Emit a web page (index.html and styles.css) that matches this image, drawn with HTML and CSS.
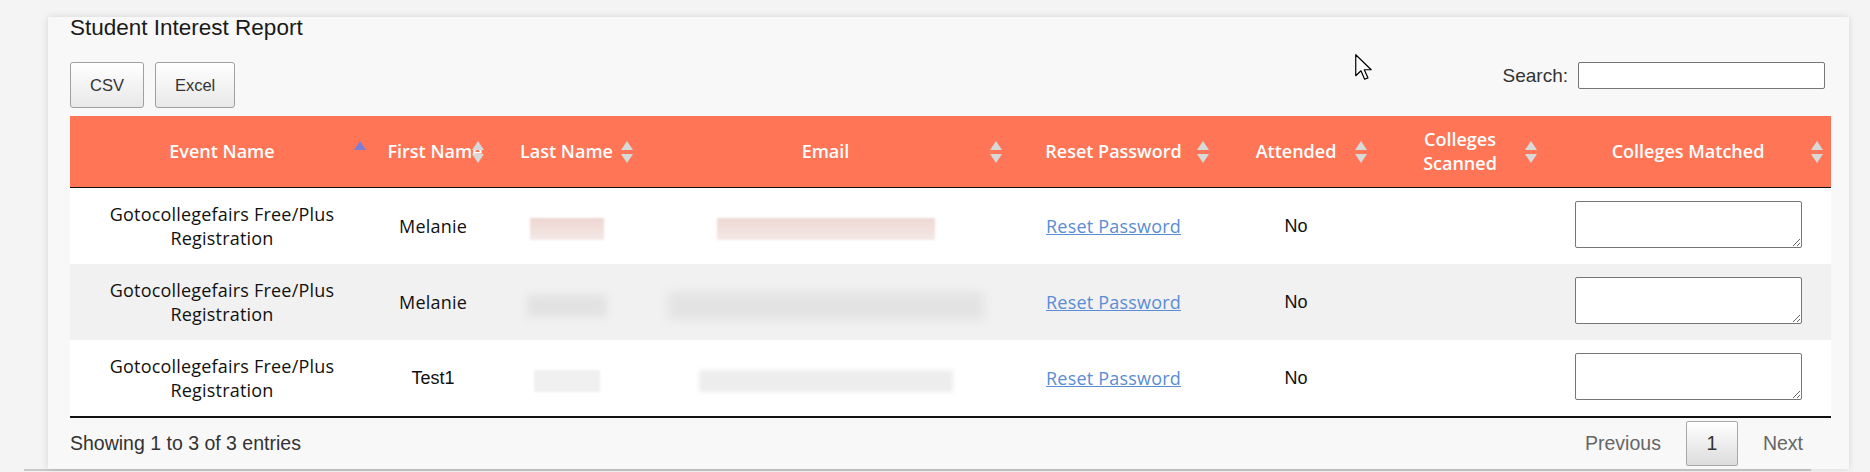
FILE: index.html
```html
<!DOCTYPE html>
<html lang="en">
<head>
<meta charset="utf-8">
<title>Student Interest Report</title>
<link rel="stylesheet" href="styles.css">
</head>
<body>
<div class="page">
  <div class="card">
    <h1 class="title">Student Interest Report</h1>
    <div class="toolbar">
      <div class="export">
        <button class="btn" type="button">CSV</button>
        <button class="btn" type="button">Excel</button>
      </div>
      <label class="search">Search:<input class="search-input" type="text"></label>
    </div>

    <table class="grid">
      <colgroup>
        <col class="c-event"><col class="c-first"><col class="c-last"><col class="c-email">
        <col class="c-reset"><col class="c-att"><col class="c-scan"><col class="c-match">
      </colgroup>
      <thead>
        <tr>
          <th>Event Name<span class="sort"><svg width="12" height="22" viewBox="0 0 12 22"><path class="asc" d="M6 0 L12 9 L0 9 Z"/></svg></span></th>
          <th class="nowrap">First Name<span class="sort"><svg width="12" height="22" viewBox="0 0 12 22"><path class="up" d="M6 0 L12 9 L0 9 Z"/><path class="down" d="M0 13 L12 13 L6 22 Z"/></svg></span></th>
          <th>Last Name<span class="sort"><svg width="12" height="22" viewBox="0 0 12 22"><path class="up" d="M6 0 L12 9 L0 9 Z"/><path class="down" d="M0 13 L12 13 L6 22 Z"/></svg></span></th>
          <th>Email<span class="sort"><svg width="12" height="22" viewBox="0 0 12 22"><path class="up" d="M6 0 L12 9 L0 9 Z"/><path class="down" d="M0 13 L12 13 L6 22 Z"/></svg></span></th>
          <th>Reset Password<span class="sort"><svg width="12" height="22" viewBox="0 0 12 22"><path class="up" d="M6 0 L12 9 L0 9 Z"/><path class="down" d="M0 13 L12 13 L6 22 Z"/></svg></span></th>
          <th>Attended<span class="sort"><svg width="12" height="22" viewBox="0 0 12 22"><path class="up" d="M6 0 L12 9 L0 9 Z"/><path class="down" d="M0 13 L12 13 L6 22 Z"/></svg></span></th>
          <th class="wrap">Colleges Scanned<span class="sort"><svg width="12" height="22" viewBox="0 0 12 22"><path class="up" d="M6 0 L12 9 L0 9 Z"/><path class="down" d="M0 13 L12 13 L6 22 Z"/></svg></span></th>
          <th>Colleges Matched<span class="sort"><svg width="12" height="22" viewBox="0 0 12 22"><path class="up" d="M6 0 L12 9 L0 9 Z"/><path class="down" d="M0 13 L12 13 L6 22 Z"/></svg></span></th>
        </tr>
      </thead>
      <tbody>
        <tr class="odd">
          <td class="hum">Gotocollegefairs Free/Plus Registration</td>
          <td class="hum">Melanie</td>
          <td><span class="redact r1-last"></span></td>
          <td><span class="redact r1-email"></span></td>
          <td class="hum"><a class="link" href="#">Reset Password</a></td>
          <td class="ari">No</td>
          <td></td>
          <td><textarea class="matched"></textarea></td>
        </tr>
        <tr class="even">
          <td class="hum">Gotocollegefairs Free/Plus Registration</td>
          <td class="hum">Melanie</td>
          <td><span class="redact r2-last"></span></td>
          <td><span class="redact r2-email"></span></td>
          <td class="hum"><a class="link" href="#">Reset Password</a></td>
          <td class="ari">No</td>
          <td></td>
          <td><textarea class="matched"></textarea></td>
        </tr>
        <tr class="odd last">
          <td class="hum">Gotocollegefairs Free/Plus Registration</td>
          <td class="ari">Test1</td>
          <td><span class="redact r3-last"></span></td>
          <td><span class="redact r3-email"></span></td>
          <td class="hum"><a class="link" href="#">Reset Password</a></td>
          <td class="ari">No</td>
          <td></td>
          <td><textarea class="matched"></textarea></td>
        </tr>
      </tbody>
    </table>

    <div class="footer">
      <div class="info">Showing 1 to 3 of 3 entries</div>
      <div class="pager">
        <span class="pg-link">Previous</span>
        <span class="pg-current">1</span>
        <span class="pg-link">Next</span>
      </div>
    </div>

    <svg class="cursor" width="18" height="27" viewBox="0 0 12 18">
      <path d="M0.5 0.5 L0.5 14.5 L4 11.2 L6.4 16.8 L8.6 15.9 L6.2 10.5 L10.8 10.5 Z" fill="#fff" stroke="#000" stroke-width="0.8" stroke-linejoin="round"/>
    </svg>
  </div>
  <div class="page-rule"></div>
</div>
</body>
</html>
```

FILE: styles.css
```css
* { box-sizing: border-box; }

html, body {
  margin: 0;
  padding: 0;
  background: #f4f4f4;
  height: 472px;
  overflow: hidden;
}

.page {
  padding-top: 17px;
}

.card {
  position: relative;
  margin-left: 48px;
  width: 1801px;
  height: 452px;
  background: #f8f8f8;
  padding: 0 18px 0 22px;
  box-shadow: 0 0 7px rgba(0, 0, 0, 0.13);
  font-family: "Liberation Sans", Arial, sans-serif;
  color: #222;
}

.title {
  margin: 0;
  font-weight: normal;
  font-size: 22.5px;
  line-height: 22px;
  color: #1a1a1a;
}

.toolbar {
  display: flex;
  justify-content: space-between;
  align-items: flex-start;
  margin-top: 23px;
  height: 46px;
}

.export {
  display: flex;
  gap: 11px;
}

.btn {
  height: 46px;
  padding: 0 19px;
  font-family: "Liberation Sans", Arial, sans-serif;
  font-size: 16.5px;
  color: #333;
  background: linear-gradient(#ffffff, #e8e8e8);
  border: 1px solid #a0a0a0;
  border-radius: 3px;
}

.search {
  display: flex;
  align-items: center;
  height: 27px;
  font-size: 19px;
  color: #333;
  margin-right: 6px;
}

.search-input {
  margin-left: 10px;
  width: 247px;
  height: 27px;
  border: 1px solid #767676;
  border-radius: 2px;
  background: #fff;
}

.grid {
  margin-top: 8px;
  width: 1761px;
  table-layout: fixed;
  border-collapse: separate;
  border-spacing: 0;
}

.c-event { width: 304px; }
.c-first { width: 118px; }
.c-last  { width: 149px; }
.c-email { width: 369px; }
.c-reset { width: 207px; }
.c-att   { width: 158px; }
.c-scan  { width: 170px; }
.c-match { width: 286px; }

.grid th {
  position: relative;
  height: 72px;
  padding: 0 10px;
  background: #ff7555;
  color: #fff;
  font-family: "Open Sans", "Noto Sans", sans-serif;
  font-weight: 600;
  font-size: 18px;
  line-height: 23.5px;
  text-align: center;
  border-bottom: 1px solid #111;
}

.grid th.nowrap {
  white-space: nowrap;
  padding: 0 4px 0 8px;
}

.grid th.wrap {
  padding: 0 22px;
}

.sort {
  position: absolute;
  right: 8px;
  top: 25px;
  width: 12px;
  height: 22px;
  display: block;
}
.sort svg { display: block; }
.sort .up, .sort .down { fill: #d8d8d8; }
.sort .asc { fill: #7b7fd8; }

.grid td {
  height: 76px;
  padding: 0 10px;
  text-align: center;
  vertical-align: middle;
  color: #111;
  font-size: 18px;
  line-height: 24px;
}

.grid tr.odd td { background: #ffffff; }
.grid tr.even td { background: #f1f1f1; }
.grid tr.last td {
  height: 78px;
  border-bottom: 2px solid #111;
}

.hum {
  font-family: "Open Sans", "Noto Sans", sans-serif;
  letter-spacing: 0.2px;
}
.ari {
  font-family: "Liberation Sans", Arial, sans-serif;
}

.link {
  color: #5a8dd4;
  text-decoration: underline;
}

.redact {
  display: inline-block;
  vertical-align: middle;
}
.r1-last {
  width: 74px; height: 22px; margin-top: 6px;
  background: linear-gradient(#efd6d1, #f4e9e7);
  filter: blur(1px);
}
.r1-email {
  width: 218px; height: 22px; margin-top: 6px;
  background: linear-gradient(#efd8d3, #f3e8e6);
  filter: blur(1px);
}
.r2-last {
  width: 80px; height: 22px; margin-top: 8px;
  background: #e2e2e2;
  filter: blur(4px);
}
.r2-email {
  width: 316px; height: 28px; margin-top: 8px;
  background: #e3e3e3;
  filter: blur(5px);
}
.r3-last {
  width: 66px; height: 22px; margin-top: 6px;
  background: #f0f0f0;
  filter: blur(1px);
}
.r3-email {
  width: 254px; height: 22px; margin-top: 6px;
  background: #ededed;
  filter: blur(2px);
}

.matched {
  display: block;
  margin: 0 auto;
  width: 227px;
  height: 47px;
  border: 1px solid #767676;
  border-radius: 2px;
  background: #fff;
  resize: both;
  position: relative;
  top: -2px;
}

.footer {
  display: flex;
  justify-content: space-between;
  align-items: center;
  height: 50px;
  font-size: 19.5px;
  color: #333;
}

.pager {
  display: flex;
  align-items: center;
  gap: 25px;
  margin-right: 28px;
}

.pg-link {
  color: #666;
}

.pg-current {
  display: flex;
  align-items: center;
  justify-content: center;
  width: 52px;
  height: 45px;
  color: #333;
  border: 1px solid #a8a8a8;
  border-radius: 2px;
  background: linear-gradient(#ffffff, #dcdcdc);
}

.cursor {
  position: absolute;
  left: 1307px;
  top: 37px;
}

.page-rule {
  margin-left: 24px;
  width: 1787px;
  height: 2px;
  background: #c9c9c9;
}
```
